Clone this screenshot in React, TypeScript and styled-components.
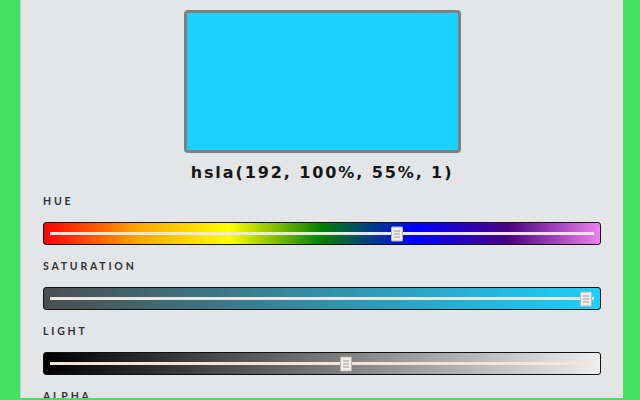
import React from "react";
import styled, { createGlobalStyle } from "styled-components";

const Global = createGlobalStyle`
  html, body { margin: 0; padding: 0; }
  body {
    background: #45e163;
    width: 640px;
    height: 400px;
    overflow: hidden;
  }
`;

const Page = styled.div`
  display: flex;
  justify-content: center;
  width: 640px;
  height: 400px;
  padding-left: 20px;
  padding-right: 17px;
  box-sizing: border-box;
`;

const Panel = styled.div`
  position: relative;
  flex: 1;
  height: 398px;
  background: #e4e5e7;
  border-left: 1px solid #c9cacc;
  box-sizing: border-box;
  padding: 10px 22px 0 22px;
  display: flex;
  flex-direction: column;
  align-items: stretch;
  overflow: hidden;
  & > * { flex-shrink: 0; }
`;

const EdgeMark = styled.div`
  position: absolute;
  left: -2px;
  top: 2px;
  width: 2px;
  height: 39px;
  background: #5a6bc0;
`;

const Swatch = styled.div<{ $color: string }>`
  align-self: center;
  width: 277px;
  height: 143px;
  box-sizing: border-box;
  border: 3px solid #7d7f80;
  border-radius: 4px;
  background: ${(p) => p.$color};
`;

const ColorText = styled.div`
  margin-top: 10px;
  height: 20px;
  line-height: 20px;
  text-align: center;
  font-family: "DejaVu Sans", sans-serif;
  font-weight: 700;
  font-size: 16px;
  letter-spacing: 1.9px;
  color: #161616;
`;

const Section = styled.div`
  display: flex;
  flex-direction: column;
  margin-top: 11px;
  & + & {
    margin-top: 14px;
  }
`;

const Label = styled.div`
  height: 14px;
  line-height: 14px;
  font-family: "Lato", sans-serif;
  font-weight: 700;
  font-size: 10.5px;
  letter-spacing: 2.8px;
  color: #2e3138;
  text-transform: uppercase;
`;

const Bar = styled.div<{ $bg: string }>`
  position: relative;
  margin-top: 14px;
  height: 23px;
  box-sizing: border-box;
  border: 1.5px solid #111;
  border-radius: 3px;
  background: ${(p) => p.$bg};
  display: flex;
  align-items: center;
  padding: 0 6px;
`;

const Track = styled.div`
  position: relative;
  flex: 1;
  height: 3px;
  background: #ece8e1;
`;

const Thumb = styled.div`
  position: absolute;
  top: 50%;
  width: 12px;
  height: 15px;
  transform: translate(-50%, -50%);
  box-sizing: border-box;
  background: #f1efeb;
  border: 1px solid #b9b6b0;
  border-radius: 1px;
  display: flex;
  flex-direction: column;
  align-items: center;
  justify-content: center;
  gap: 2px;
`;

const Grip = styled.span`
  display: block;
  width: 6px;
  height: 1px;
  background: #9f9b95;
`;

type SliderDef = { label: string; bg: string; value: number };

const sliders: SliderDef[] = [
  {
    label: "Hue",
    bg: "linear-gradient(to right, red, orange, yellow, green, blue, indigo, violet)",
    value: 0.637,
  },
  {
    label: "Saturation",
    bg: "linear-gradient(to right, #4b4e50, hsl(192, 100%, 55%))",
    value: 0.985,
  },
  {
    label: "Light",
    bg: "linear-gradient(to right, #000, #eeeeee)",
    value: 0.545,
  },
  {
    label: "Alpha",
    bg: "linear-gradient(to right, rgba(26,209,255,0), rgb(26,209,255))",
    value: 1,
  },
];

export default function App() {
  return (
    <>
      <Global />
      <Page>
        <Panel>
          <EdgeMark />
          <Swatch $color="hsla(192, 100%, 55%, 1)" />
          <ColorText>hsla(192, 100%, 55%, 1)</ColorText>
          {sliders.map((s) => (
            <Section key={s.label}>
              <Label>{s.label}</Label>
              <Bar $bg={s.bg}>
                <Track>
                  <Thumb style={{ left: `${s.value * 100}%` }}>
                    <Grip />
                    <Grip />
                    <Grip />
                  </Thumb>
                </Track>
              </Bar>
            </Section>
          ))}
        </Panel>
      </Page>
    </>
  );
}
